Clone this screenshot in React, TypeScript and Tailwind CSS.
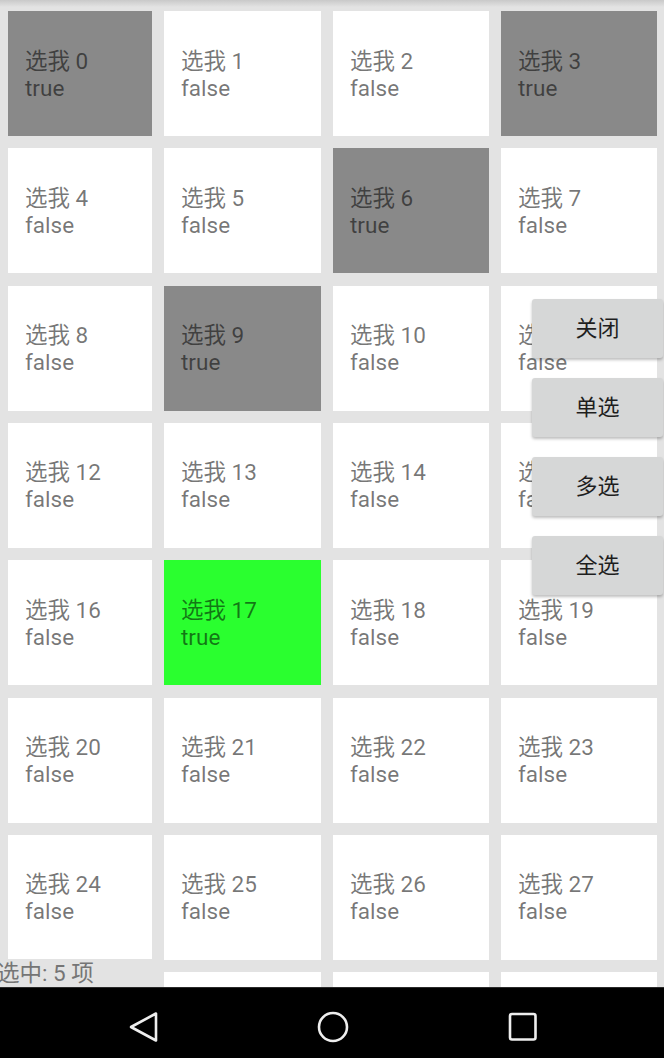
const selected = new Set([0, 3, 6, 9])
const green = 17

const items = Array.from({ length: 32 }, (_, i) => i)

function Cell({ i }: { i: number }) {
  const on = selected.has(i) || i === green
  const bg = i === green ? 'bg-[#2aff2f]' : selected.has(i) ? 'bg-[#898989]' : 'bg-white'
  return (
    <div className={`${bg} flex flex-col justify-center pl-[17px] pt-[2px] text-[22.5px] leading-[27px] text-[rgba(0,0,0,0.54)]`}>
      <span>选我 {i}</span>
      <span>{on ? 'true' : 'false'}</span>
    </div>
  )
}

export default function App() {
  return (
    <div
      className="w-[664px] h-[1058px] flex flex-col bg-[#e3e3e3] overflow-hidden"
      style={{ fontFamily: 'Roboto, "Noto Sans CJK SC", sans-serif' }}
    >
      <div className="relative flex-1 overflow-hidden">
        {/* toolbar shadow */}
        <div className="absolute top-0 left-0 right-0 h-[7px] bg-gradient-to-b from-[#c9c9c9] to-[#e3e3e3] z-10" />

        <div className="grid grid-cols-[144px_157px_156px_156px] auto-rows-[125px] gap-x-[12px] gap-y-[12.34px] pl-[8px] pt-[11px]">
          {items.map((i) => (
            <Cell key={i} i={i} />
          ))}
        </div>

        {/* floating actions */}
        <div className="absolute left-[532px] top-[299px] flex flex-col gap-[20px]">
          {['关闭', '单选', '多选', '全选'].map((t) => (
            <button
              key={t}
              className="w-[131px] h-[59px] rounded-[3px] bg-[#d6d7d7] shadow-[0_2px_3px_rgba(0,0,0,0.25)] text-[22px] text-[#1e1e1e] flex items-center justify-center"
            >
              {t}
            </button>
          ))}
        </div>

        {/* status */}
        <div className="absolute left-0 bottom-0 w-[152px] h-[28px] bg-[#e3e3e3] text-[22.5px] leading-[28px] text-[#757575] -indent-[3px] whitespace-nowrap">
          选中: 5 项
        </div>
      </div>

      {/* nav bar */}
      <div className="h-[71px] bg-black border-t border-[#2a2a2a] relative">
        <svg width="664" height="71" className="absolute inset-0" fill="none" stroke="#eeeeee" strokeWidth="2.6" strokeLinejoin="round" strokeLinecap="round">
          <path d="M131 39 L156 25.5 L156 52.5 Z" />
          <circle cx="333" cy="39" r="14" />
          <rect x="510" y="26" width="25.5" height="25.5" rx="2" />
        </svg>
      </div>
    </div>
  )
}
